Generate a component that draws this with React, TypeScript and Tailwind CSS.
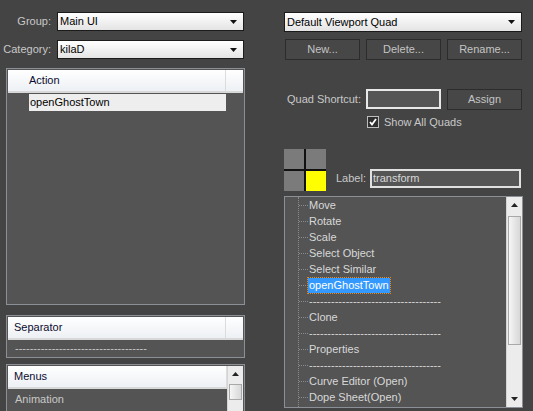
import React from 'react';

const font = { fontFamily: '"Liberation Sans", Arial, sans-serif' };

const DASHES = '------------------------------------';

function Dropdown({ value, className = '' }: { value: string; className?: string }) {
  return (
    <div
      className={`shrink-0 flex items-center justify-between h-[19px] border border-[#1b1b1b] bg-gradient-to-b from-[#ffffff] to-[#e4e4e4] pl-[2px] pr-[6px] text-[11px] text-black ${className}`}
    >
      <span>{value}</span>
      <svg width="7" height="4" viewBox="0 0 7 4">
        <path d="M0 0 H7 L3.5 4 Z" fill="#111" />
      </svg>
    </div>
  );
}

function Button({ label }: { label: string }) {
  return (
    <div className="shrink-0 flex items-center justify-center w-[75px] h-[21px] border border-[#2c2c2c] bg-[#474747] text-[11px] text-[#c4c4c4]">
      {label}
    </div>
  );
}

function ScrollBar({ thumbTop, thumbHeight, showDown = true }: { thumbTop: number; thumbHeight: number; showDown?: boolean }) {
  return (
    <div className="relative shrink-0 w-[16px] h-full bg-[#ececec] border-l border-[#d4d4d4]">
      <svg className="absolute left-[4px] top-[6px]" width="7" height="4" viewBox="0 0 7 4">
        <path d="M3.5 0 L7 4 H0 Z" fill="#222" />
      </svg>
      <div
        className="absolute left-[1px] right-[1px] border border-[#a8a8a8] bg-gradient-to-r from-[#f6f6f6] via-[#e6e6e6] to-[#d8d8d8]"
        style={{ top: thumbTop, height: thumbHeight }}
      />
      {showDown && (
        <svg className="absolute left-[4px] bottom-[6px]" width="7" height="4" viewBox="0 0 7 4">
          <path d="M0 0 H7 L3.5 4 Z" fill="#222" />
        </svg>
      )}
    </div>
  );
}

function ListHeader({ title, pad = 'pl-[21px]' }: { title: string; pad?: string }) {
  return (
    <div className="flex h-[23px] border-b-2 border-[#d8d8d8] bg-gradient-to-b from-[#ffffff] to-[#edf0f4]">
      <div className={`flex items-center w-[218px] border-r border-[#dcdcdc] ${pad} text-[11px] text-[#0c0c30]`}>
        {title}
      </div>
    </div>
  );
}

const treeItems = [
  'Move',
  'Rotate',
  'Scale',
  'Select Object',
  'Select Similar',
  'openGhostTown',
  DASHES,
  'Clone',
  DASHES,
  'Properties',
  DASHES,
  'Curve Editor (Open)',
  'Dope Sheet(Open)',
];

export default function App() {
  return (
    <div className="w-[533px] h-[411px] overflow-hidden bg-[#444444] flex" style={font}>
      {/* left column */}
      <div className="w-[250px] flex flex-col">
        <div className="shrink-0 flex items-center mt-[12px] h-[19px]">
          <div className="w-[52px] text-right text-[11px] text-[#c8c8c8] pr-[1px]">Group:</div>
          <Dropdown value="Main UI" className="ml-[5px] w-[187px]" />
        </div>
        <div className="shrink-0 flex items-center mt-[9px] h-[19px]">
          <div className="w-[52px] text-right text-[11px] text-[#c8c8c8] pr-[1px]">Category:</div>
          <Dropdown value="kilaD" className="ml-[5px] w-[187px]" />
        </div>

        <div className="shrink-0 ml-[6px] mt-[9px] w-[239px] h-[237px] border border-[#8a9096] bg-[#545454] p-[1px]">
          <ListHeader title="Action" />
          <div className="pl-[21px] pt-[1px]">
            <div className="w-[197px] h-[17px] bg-[#eeeeee] text-[11px] text-black flex items-center pl-[1px]">
              openGhostTown
            </div>
          </div>
        </div>

        <div className="shrink-0 ml-[6px] mt-[10px] w-[239px] h-[43px] border border-[#8a9096] bg-[#545454] p-[1px]">
          <ListHeader title="Separator" pad="pl-[6px]" />
          <div className="pl-[7px] pt-[1px] text-[11px] text-[#c8c8c8] leading-[15px]">{DASHES}</div>
        </div>

        <div className="shrink-0 ml-[6px] mt-[6px] w-[239px] h-[60px] border border-[#8a9096] bg-[#545454] p-[1px] flex">
          <div className="flex-1">
            <div className="flex h-[23px] border-b-2 border-[#d8d8d8] bg-gradient-to-b from-[#ffffff] to-[#edf0f4]">
              <div className="flex items-center flex-1 border-r border-[#dcdcdc] pl-[6px] text-[11px] text-[#0c0c30]">
                Menus
              </div>
            </div>
            <div className="pl-[7px] pt-[2px] text-[11px] text-[#c8c8c8]">Animation</div>
          </div>
          <ScrollBar thumbTop={18} thumbHeight={16} showDown={false} />
        </div>
      </div>

      {/* right column */}
      <div className="ml-[34px] w-[239px] flex flex-col">
        <Dropdown value="Default Viewport Quad" className="mt-[12px] w-[238px] h-[20px]" />
        <div className="shrink-0 flex gap-[6px] mt-[7px] pl-[1px]">
          <Button label="New..." />
          <Button label="Delete..." />
          <Button label="Rename..." />
        </div>

        <div className="shrink-0 flex items-center mt-[29px] h-[20px]">
          <div className="w-[80px] whitespace-nowrap text-right text-[11px] text-[#c8c8c8] pr-[3px]">Quad Shortcut:</div>
          <div className="ml-[2px] w-[75px] h-[20px] border-2 border-[#e8e8e8] bg-[#555555]" />
          <div className="ml-[6px] mt-[1px]">
            <Button label="Assign" />
          </div>
        </div>

        <div className="shrink-0 flex items-center mt-[6px] ml-[83px] h-[14px]">
          <div className="w-[12px] h-[12px] border border-[#bdbdbd] bg-[#2f2f2f] flex items-center justify-center">
            <svg width="8" height="8" viewBox="0 0 8 8">
              <path d="M1 4 L3 6.5 L7 1" stroke="#ffffff" strokeWidth="1.8" fill="none" />
            </svg>
          </div>
          <span className="ml-[5px] text-[11px] text-[#c8c8c8]">Show All Quads</span>
        </div>

        <div className="shrink-0 flex items-end mt-[20px]">
          <div className="grid grid-cols-2 gap-[2px] w-[42px] h-[42px] bg-[#111111]">
            <div className="bg-[#7b7b7b]" />
            <div className="bg-[#7b7b7b]" />
            <div className="bg-[#7b7b7b]" />
            <div className="bg-[#ffff00]" />
          </div>
          <span className="ml-[10px] mb-[5px] text-[11px] text-[#c8c8c8]">Label:</span>
          <div className="ml-[4px] mb-[3px] w-[151px] h-[19px] border-2 border-[#e0e0e0] bg-[#555555] text-[11px] text-[#d8d8d8] flex items-center pl-[1px]">
            transform
          </div>
        </div>

        <div className="shrink-0 mt-[5px] h-[212px] border border-[#8a9096] bg-[#545454] flex">
          <div className="relative flex-1">
            <div className="absolute left-[13px] top-0 bottom-0 border-l border-dotted border-[#8a8a8a]" />
            {treeItems.map((item, i) => (
              <div key={i} className="flex items-center h-[16px]">
                <div className="ml-[14px] w-[9px] border-t border-dotted border-[#8a8a8a]" />
                {item === 'openGhostTown' ? (
                  <span className="px-[1px] h-[15px] flex items-center bg-[#3399ff] text-white text-[11px] outline outline-1 outline-dotted outline-[#e08a2a]">
                    {item}
                  </span>
                ) : (
                  <span className="pl-[1px] text-[11px] text-[#d8d8d8]">{item}</span>
                )}
              </div>
            ))}
          </div>
          <ScrollBar thumbTop={19} thumbHeight={129} />
        </div>
      </div>
    </div>
  );
}
